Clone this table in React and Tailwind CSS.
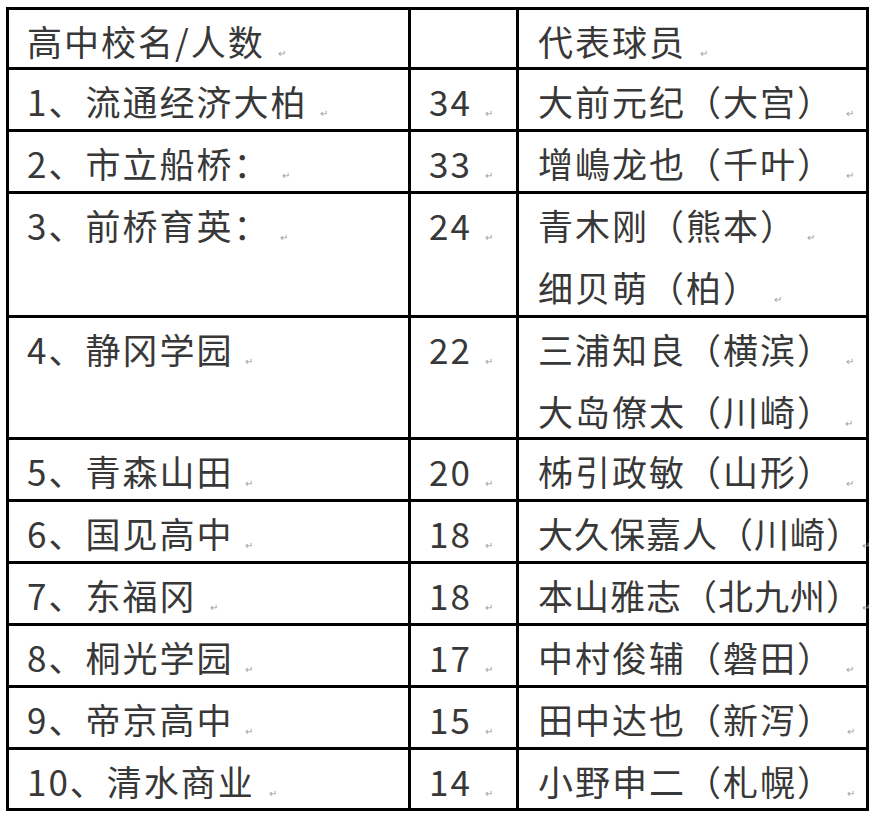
import React from "react";

const rows = [
  { h: "h-[60px]", name: ["高中校名/人数"], nameMark: "ml-[13px]", num: "", players: [["代表球员", "ml-[14px]"]] },
  { h: "h-[62px]", name: ["1、流通经济大柏"], nameMark: "ml-[13px]", num: "34", players: [["大前元纪（大宫）", "ml-[12px]"]] },
  { h: "h-[62px]", name: ["2、市立船桥："], nameMark: "ml-[12px]", num: "33", players: [["增嶋龙也（千叶）", "ml-[12px]"]] },
  {
    h: "h-[124px]",
    name: ["3、前桥育英："],
    nameMark: "ml-[10px]",
    num: "24",
    players: [
      ["青木刚（熊本）", "ml-[10px]"],
      ["细贝萌（柏）", "ml-[14px]"],
    ],
  },
  {
    h: "h-[122px]",
    name: ["4、静冈学园"],
    nameMark: "ml-[12px]",
    num: "22",
    players: [
      ["三浦知良（横滨）", "ml-[12px]"],
      ["大岛僚太（川崎）", "ml-[11px]"],
    ],
  },
  { h: "h-[62px]", name: ["5、青森山田"], nameMark: "ml-[12px]", num: "20", players: [["柹引政敏（山形）", "ml-[12px]"]] },
  { h: "h-[62px]", name: ["6、国见高中"], nameMark: "ml-[12px]", num: "18", players: [["大久保嘉人（川崎）", "ml-0", "tracking-[1px]"]] },
  { h: "h-[62px]", name: ["7、东福冈"], nameMark: "ml-[14px]", num: "18", players: [["本山雅志（北九州）", "ml-0", "tracking-[1px]"]] },
  { h: "h-[62px]", name: ["8、桐光学园"], nameMark: "ml-[12px]", num: "17", players: [["中村俊辅（磐田）", "ml-[12px]"]] },
  { h: "h-[62px]", name: ["9、帝京高中"], nameMark: "ml-[12px]", num: "15", players: [["田中达也（新泻）", "ml-[13px]"]] },
  { h: "h-[58px]", name: ["10、清水商业"], nameMark: "ml-[14px]", num: "14", players: [["小野申二（札幌）", "ml-[13px]"]], last: true },
];

const Mark = ({ className }) => (
  <span
    className={`inline-block align-middle text-[10px] leading-none tracking-normal text-[#a0a0a0] translate-y-[6px] ${className}`}
  >
    ↵
  </span>
);

export default function App() {
  return (
    <div className="min-h-screen bg-white pt-[7px] pl-[6px]">
      <div
        className="w-[863px] border-[3px] border-black text-[35px] tracking-[2px] text-[#383838]"
        style={{ fontFamily: '"Noto Sans CJK SC", "Noto Sans", sans-serif' }}
      >
        {rows.map((r, i) => (
          <div key={i} className={`flex ${r.h} ${r.last ? "" : "border-b-[3px] border-black"}`}>
            <div className="w-[402px] shrink-0 border-r-[3px] border-black pl-[18px]">
              {r.name.map((n, j) => (
                <div key={j} className="leading-[62px] whitespace-nowrap">
                  {n}
                  <Mark className={r.nameMark} />
                </div>
              ))}
            </div>
            <div className="w-[108px] shrink-0 border-r-[3px] border-black pl-[18px]">
              {r.num && (
                <div className="leading-[62px] whitespace-nowrap">
                  {r.num}
                  <Mark className="ml-[13px]" />
                </div>
              )}
            </div>
            <div className="flex-1 pl-[19px]">
              {r.players.map(([p, m, t], j) => (
                <div key={j} className={`leading-[62px] whitespace-nowrap ${t || ""}`}>
                  {p}
                  <Mark className={m} />
                </div>
              ))}
            </div>
          </div>
        ))}
      </div>
    </div>
  );
}
